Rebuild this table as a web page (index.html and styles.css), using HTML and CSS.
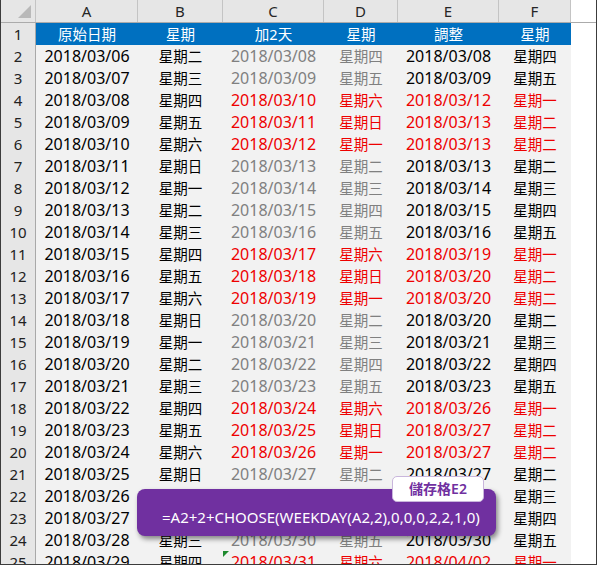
FILE: index.html
```html
<!DOCTYPE html>
<html lang="zh-Hant">
<head>
<meta charset="utf-8">
<title>WEEKDAY CHOOSE</title>
<link rel="stylesheet" href="styles.css">
</head>
<body>
<div class="frame">
  <div class="row colhead">
    <div class="corner"><span class="tri"></span></div>
    <div class="h">A</div><div class="h">B</div><div class="h">C</div><div class="h">D</div><div class="h">E</div><div class="h">F</div><div class="h rest"></div>
  </div>
  <div class="row title">
    <div class="rn">1</div>
    <div class="c">原始日期</div><div class="c">星期</div><div class="c">加2天</div><div class="c">星期</div><div class="c">調整</div><div class="c">星期</div><div class="rest"></div>
  </div>
  <div class="row"><div class="rn">2</div><div class="c d">2018/03/06</div><div class="c">星期二</div><div class="c d gr">2018/03/08</div><div class="c gr">星期四</div><div class="c d">2018/03/08</div><div class="c">星期四</div><div class="rest"></div></div>
  <div class="row"><div class="rn">3</div><div class="c d">2018/03/07</div><div class="c">星期三</div><div class="c d gr">2018/03/09</div><div class="c gr">星期五</div><div class="c d">2018/03/09</div><div class="c">星期五</div><div class="rest"></div></div>
  <div class="row"><div class="rn">4</div><div class="c d">2018/03/08</div><div class="c">星期四</div><div class="c d rd">2018/03/10</div><div class="c rd">星期六</div><div class="c d rd">2018/03/12</div><div class="c rd">星期一</div><div class="rest"></div></div>
  <div class="row"><div class="rn">5</div><div class="c d">2018/03/09</div><div class="c">星期五</div><div class="c d rd">2018/03/11</div><div class="c rd">星期日</div><div class="c d rd">2018/03/13</div><div class="c rd">星期二</div><div class="rest"></div></div>
  <div class="row"><div class="rn">6</div><div class="c d">2018/03/10</div><div class="c">星期六</div><div class="c d rd">2018/03/12</div><div class="c rd">星期一</div><div class="c d rd">2018/03/13</div><div class="c rd">星期二</div><div class="rest"></div></div>
  <div class="row"><div class="rn">7</div><div class="c d">2018/03/11</div><div class="c">星期日</div><div class="c d gr">2018/03/13</div><div class="c gr">星期二</div><div class="c d">2018/03/13</div><div class="c">星期二</div><div class="rest"></div></div>
  <div class="row"><div class="rn">8</div><div class="c d">2018/03/12</div><div class="c">星期一</div><div class="c d gr">2018/03/14</div><div class="c gr">星期三</div><div class="c d">2018/03/14</div><div class="c">星期三</div><div class="rest"></div></div>
  <div class="row"><div class="rn">9</div><div class="c d">2018/03/13</div><div class="c">星期二</div><div class="c d gr">2018/03/15</div><div class="c gr">星期四</div><div class="c d">2018/03/15</div><div class="c">星期四</div><div class="rest"></div></div>
  <div class="row"><div class="rn">10</div><div class="c d">2018/03/14</div><div class="c">星期三</div><div class="c d gr">2018/03/16</div><div class="c gr">星期五</div><div class="c d">2018/03/16</div><div class="c">星期五</div><div class="rest"></div></div>
  <div class="row"><div class="rn">11</div><div class="c d">2018/03/15</div><div class="c">星期四</div><div class="c d rd">2018/03/17</div><div class="c rd">星期六</div><div class="c d rd">2018/03/19</div><div class="c rd">星期一</div><div class="rest"></div></div>
  <div class="row"><div class="rn">12</div><div class="c d">2018/03/16</div><div class="c">星期五</div><div class="c d rd">2018/03/18</div><div class="c rd">星期日</div><div class="c d rd">2018/03/20</div><div class="c rd">星期二</div><div class="rest"></div></div>
  <div class="row"><div class="rn">13</div><div class="c d">2018/03/17</div><div class="c">星期六</div><div class="c d rd">2018/03/19</div><div class="c rd">星期一</div><div class="c d rd">2018/03/20</div><div class="c rd">星期二</div><div class="rest"></div></div>
  <div class="row"><div class="rn">14</div><div class="c d">2018/03/18</div><div class="c">星期日</div><div class="c d gr">2018/03/20</div><div class="c gr">星期二</div><div class="c d">2018/03/20</div><div class="c">星期二</div><div class="rest"></div></div>
  <div class="row"><div class="rn">15</div><div class="c d">2018/03/19</div><div class="c">星期一</div><div class="c d gr">2018/03/21</div><div class="c gr">星期三</div><div class="c d">2018/03/21</div><div class="c">星期三</div><div class="rest"></div></div>
  <div class="row"><div class="rn">16</div><div class="c d">2018/03/20</div><div class="c">星期二</div><div class="c d gr">2018/03/22</div><div class="c gr">星期四</div><div class="c d">2018/03/22</div><div class="c">星期四</div><div class="rest"></div></div>
  <div class="row"><div class="rn">17</div><div class="c d">2018/03/21</div><div class="c">星期三</div><div class="c d gr">2018/03/23</div><div class="c gr">星期五</div><div class="c d">2018/03/23</div><div class="c">星期五</div><div class="rest"></div></div>
  <div class="row"><div class="rn">18</div><div class="c d">2018/03/22</div><div class="c">星期四</div><div class="c d rd">2018/03/24</div><div class="c rd">星期六</div><div class="c d rd">2018/03/26</div><div class="c rd">星期一</div><div class="rest"></div></div>
  <div class="row"><div class="rn">19</div><div class="c d">2018/03/23</div><div class="c">星期五</div><div class="c d rd">2018/03/25</div><div class="c rd">星期日</div><div class="c d rd">2018/03/27</div><div class="c rd">星期二</div><div class="rest"></div></div>
  <div class="row"><div class="rn">20</div><div class="c d">2018/03/24</div><div class="c">星期六</div><div class="c d rd">2018/03/26</div><div class="c rd">星期一</div><div class="c d rd">2018/03/27</div><div class="c rd">星期二</div><div class="rest"></div></div>
  <div class="row"><div class="rn">21</div><div class="c d">2018/03/25</div><div class="c">星期日</div><div class="c d gr">2018/03/27</div><div class="c gr">星期二</div><div class="c d">2018/03/27</div><div class="c">星期二</div><div class="rest"></div></div>
  <div class="row"><div class="rn">22</div><div class="c d">2018/03/26</div><div class="c">星期一</div><div class="c d gr">2018/03/28</div><div class="c gr">星期三</div><div class="c d">2018/03/28</div><div class="c">星期三</div><div class="rest"></div></div>
  <div class="row"><div class="rn">23</div><div class="c d">2018/03/27</div><div class="c">星期二</div><div class="c d gr">2018/03/29</div><div class="c gr">星期四</div><div class="c d">2018/03/29</div><div class="c">星期四</div><div class="rest"></div></div>
  <div class="row"><div class="rn">24</div><div class="c d">2018/03/28</div><div class="c">星期三</div><div class="c d gr">2018/03/30</div><div class="c gr">星期五</div><div class="c d">2018/03/30</div><div class="c">星期五</div><div class="rest"></div></div>
  <div class="row"><div class="rn">25</div><div class="c d">2018/03/29</div><div class="c">星期四</div><div class="c d rd flag">2018/03/31</div><div class="c rd">星期六</div><div class="c d rd">2018/04/02</div><div class="c rd">星期一</div><div class="rest"></div></div>

  <div class="callout">
    <div class="formula">=A2+2+CHOOSE(WEEKDAY(A2,2),0,0,0,2,2,1,0)</div>
  </div>
  <div class="tag">儲存格E2</div>
</div>
</body>
</html>
```

FILE: styles.css
```css
* { box-sizing: border-box; }
html, body { margin: 0; padding: 0; background: #ffffff; }
body {
  font-family: "Noto Sans", "Noto Sans CJK TC", sans-serif;
  font-size: 15px;
  color: #000;
}
.frame {
  position: relative;
  width: 597px;
  height: 565px;
  overflow: hidden;
  border-left: 1px solid #3c3c3c;
  border-right: 1px solid #3c3c3c;
  border-bottom: 1px solid #3c3c3c;
  background: #fff;
}
.row {
  display: grid;
  grid-template-columns: 35px 102px 85px 101px 74px 101px 72px 1fr;
  height: 22px;
}
.colhead {
  height: 23px;
  background: #e6e6e6;
  border-bottom: 1px solid #ababab;
}
.colhead .h, .colhead .corner {
  border-right: 1px solid #c4c4c4;
  text-align: center;
  line-height: 22px;
  color: #262626;
  font-family: "Noto Sans", sans-serif;
  font-size: 15px;
}
.colhead .rest { border-right: none; }
.corner { position: relative; border-right-color: #ababab; }
.tri {
  position: absolute;
  right: 4px;
  bottom: 4px;
  width: 0;
  height: 0;
  border-left: 13px solid transparent;
  border-bottom: 13px solid #b9b9b9;
}
.rn {
  background: #e6e6e6;
  border-right: 1px solid #a9a9a9;
  border-bottom: 1px solid #cfcfcf;
  text-align: center;
  line-height: 22px;
  color: #222;
  font-size: 15px;
}
.c {
  background: #f2f2f2;
  border-bottom: 1px solid #9a9a9a;
  text-align: center;
  line-height: 22px;
  white-space: nowrap;
  font-size: 14.5px;
}
.c.d { font-size: 16px; }
.title .c {
  background: #0070c0;
  color: #ffffff;
  border-bottom-color: #8a8a8a;
}
.gr { color: #808080; }
.rd { color: #ee0000; }
.flag { position: relative; }
.flag::before {
  content: "";
  position: absolute;
  left: 0;
  top: 0;
  width: 0;
  height: 0;
  border-top: 6px solid #1e8a2e;
  border-right: 6px solid transparent;
}
.rest { background: #ffffff; }

.callout {
  position: absolute;
  left: 136px;
  top: 489px;
  width: 359px;
  height: 47px;
  background: #7030a0;
  border-radius: 8px;
  box-shadow: 2px 3px 5px rgba(0, 0, 0, 0.45);
  padding: 18px 0 0 25px;
}
.formula {
  color: #ffffff;
  font-size: 15px;
  line-height: 20px;
  white-space: nowrap;
}
.tag {
  position: absolute;
  left: 391px;
  top: 476px;
  width: 92px;
  height: 26px;
  background: #ffffff;
  border: 1px solid #c9b6dc;
  border-radius: 5px;
  color: #7030a0;
  font-weight: 600;
  font-size: 14px;
  line-height: 24px;
  text-align: center;
}
```
